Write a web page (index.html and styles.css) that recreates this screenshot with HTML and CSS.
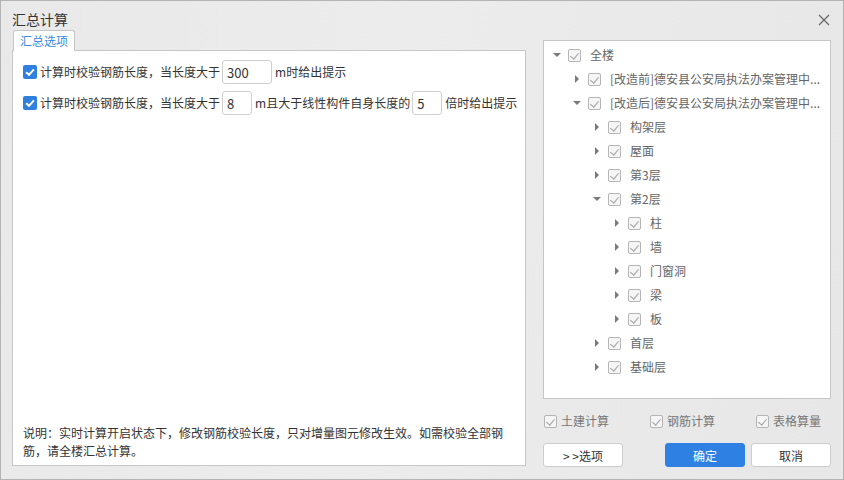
FILE: index.html
```html
<!DOCTYPE html>
<html lang="zh">

<head>
  <meta charset="UTF-8" />
  <meta name="viewport" content="width=device-width, initial-scale=1.0" />
  <title>汇总计算</title>
  <link rel="stylesheet" href="styles.css">
</head>

<body>
  <div class="dialog">
    <div class="header">
      <div class="title">汇总计算</div>
      <svg class="close" width="12" height="12" viewBox="0 0 12 12">
        <path d="M1 1 L11 11 M11 1 L1 11" stroke="#666" stroke-width="1.2" fill="none" />
      </svg>
    </div>

    <div class="main">
      <section class="left">
        <div class="tab">汇总选项</div>
        <div class="panel">
          <div class="opt-row">
            <span class="cb-blue"><svg width="14" height="14" viewBox="0 0 14 14"><path d="M3.2 7.2 L6 9.8 L10.9 4.4" stroke="#fff" stroke-width="2" fill="none" /></svg></span>
            <span class="opt-text">计算时校验钢筋长度，当长度大于</span>
            <input class="num w50" type="text" value="300">
            <span class="opt-text">m时给出提示</span>
          </div>
          <div class="opt-row">
            <span class="cb-blue"><svg width="14" height="14" viewBox="0 0 14 14"><path d="M3.2 7.2 L6 9.8 L10.9 4.4" stroke="#fff" stroke-width="2" fill="none" /></svg></span>
            <span class="opt-text">计算时校验钢筋长度，当长度大于</span>
            <input class="num w30" type="text" value="8">
            <span class="opt-text">m且大于线性构件自身长度的</span>
            <input class="num w30" type="text" value="5">
            <span class="opt-text">倍时给出提示</span>
          </div>
          <div class="note">说明：实时计算开启状态下，修改钢筋校验长度，只对增量图元修改生效。如需校验全部钢筋，请全楼汇总计算。</div>
        </div>
      </section>

      <section class="right">
        <div class="tree"></div>
        <div class="checks">
          <label class="chk"><span class="cb-gray"></span>土建计算</label>
          <label class="chk"><span class="cb-gray"></span>钢筋计算</label>
          <label class="chk"><span class="cb-gray"></span>表格算量</label>
        </div>
        <div class="buttons">
          <button class="btn">&gt; &gt;选项</button>
          <div class="btn-pair">
            <button class="btn primary">确定</button>
            <button class="btn">取消</button>
          </div>
        </div>
      </section>
    </div>
  </div>

  <script>
    const tree = document.querySelector(".tree");
    const carets = {
      down: '<svg width="12" height="12" viewBox="0 0 12 12"><path d="M2 4 L10 4 L6 8 Z" fill="#7a7a7a"/></svg>',
      right: '<svg width="12" height="12" viewBox="0 0 12 12"><path d="M4 2 L8 6 L4 10 Z" fill="#7a7a7a"/></svg>'
    };
    const nodes = [
      [0, "down", "全楼"],
      [1, "right", "[改造前]德安县公安局执法办案管理中..."],
      [1, "down", "[改造后]德安县公安局执法办案管理中..."],
      [2, "right", "构架层"],
      [2, "right", "屋面"],
      [2, "right", "第3层"],
      [2, "down", "第2层"],
      [3, "right", "柱"],
      [3, "right", "墙"],
      [3, "right", "门窗洞"],
      [3, "right", "梁"],
      [3, "right", "板"],
      [2, "right", "首层"],
      [2, "right", "基础层"]
    ];

    nodes.forEach(function (n) {
      tree.innerHTML += `<div class="node" style="padding-left:${7 + n[0] * 20}px">
        <span class="caret">${carets[n[1]]}</span>
        <span class="cb-gray"></span>
        <span class="node-text">${n[2]}</span>
      </div>`;
    });
  </script>
</body>

</html>
```

FILE: styles.css
```css
* {
  box-sizing: border-box;
}

body {
  margin: 0;
  padding: 0;
  font-family: "Noto Sans CJK SC", "Noto Sans", sans-serif;
  font-size: 12px;
  color: #333;
}

.dialog {
  width: 844px;
  height: 480px;
  border: 1px solid #b4b4b4;
  background: linear-gradient(100deg, #e9e9e9 0%, #ececec 45%, #e7e7e7 100%);
  display: flex;
  flex-direction: column;
}

.header {
  height: 29px;
  padding: 8px 13px 0 11px;
  display: flex;
  justify-content: space-between;
}

.title {
  font-size: 14px;
  line-height: 20px;
  color: #333;
}

.close {
  margin-top: 5px;
}

.main {
  display: flex;
  padding: 0 12px 0 11px;
  gap: 17px;
}

.left {
  width: 514px;
  flex-shrink: 0;
  display: flex;
  flex-direction: column;
}

.tab {
  position: relative;
  z-index: 1;
  align-self: flex-start;
  margin-left: 1px;
  margin-bottom: -1px;
  height: 21px;
  padding: 0 6px;
  line-height: 20px;
  color: #3b8ae0;
  background-color: #ffffff;
  border: 1px solid #c6c6c6;
  border-bottom: none;
  border-radius: 3px 3px 0 0;
}

.panel {
  height: 416px;
  background-color: #ffffff;
  border: 1px solid #c6c6c6;
  padding: 9px 4px 5px 10px;
  display: flex;
  flex-direction: column;
  gap: 7px;
}

.opt-row {
  display: flex;
  align-items: center;
  height: 24px;
  white-space: nowrap;
}

.opt-row > * {
  flex-shrink: 0;
}

.cb-blue {
  width: 14px;
  height: 14px;
  border-radius: 2px;
  background-color: #2f7fe1;
  margin-right: 3px;
  display: flex;
}

.opt-text {
  line-height: 18px;
  color: #333;
}

.num {
  height: 24px;
  margin: 0 3px 0 2px;
  padding: 0 0 0 4px;
  border: 1px solid #cfcfcf;
  border-radius: 3px;
  font-family: "Noto Sans CJK SC", "Noto Sans", sans-serif;
  font-size: 13px;
  color: #333;
  outline: none;
}

.w50 {
  width: 50px;
}

.w30 {
  width: 30px;
}

.note {
  margin-top: auto;
  width: 484px;
  line-height: 18px;
  color: #333;
}

.right {
  width: 288px;
  flex-shrink: 0;
  margin-top: 10px;
  display: flex;
  flex-direction: column;
}

.tree {
  height: 359px;
  background-color: #ffffff;
  border: 1px solid #c6c6c6;
  padding-top: 2px;
}

.node {
  display: flex;
  align-items: center;
  height: 24px;
  white-space: nowrap;
}

.caret {
  width: 12px;
  height: 12px;
  margin-right: 5px;
  display: flex;
}

.cb-gray {
  width: 13px;
  height: 13px;
  flex-shrink: 0;
  border: 1px solid #b5b5b5;
  border-radius: 2px;
  background-color: #f5f5f5;
  position: relative;
}

.cb-gray::after {
  content: "";
  position: absolute;
  left: 3px;
  top: 1px;
  width: 4px;
  height: 7px;
  border-right: 1.5px solid #a0a0a0;
  border-bottom: 1.5px solid #a0a0a0;
  transform: rotate(40deg);
}

.node-text {
  margin-left: 9px;
  line-height: 18px;
  color: #666;
}

.checks {
  margin-top: 12px;
  height: 20px;
  padding: 0 10px 0 1px;
  display: flex;
  justify-content: space-between;
  align-items: center;
}

.chk {
  display: flex;
  align-items: center;
  gap: 4px;
  color: #777;
  line-height: 18px;
}

.buttons {
  margin-top: 12px;
  display: flex;
  justify-content: space-between;
}

.btn-pair {
  display: flex;
  gap: 6px;
}

.btn {
  width: 80px;
  height: 24px;
  padding: 0;
  font-family: "Noto Sans CJK SC", "Noto Sans", sans-serif;
  font-size: 12px;
  color: #333;
  background-color: #ffffff;
  border: 1px solid #cdcdcd;
  border-radius: 3px;
}

.primary {
  color: #ffffff;
  background-color: #2e80e2;
  border-color: #2e80e2;
}
```
